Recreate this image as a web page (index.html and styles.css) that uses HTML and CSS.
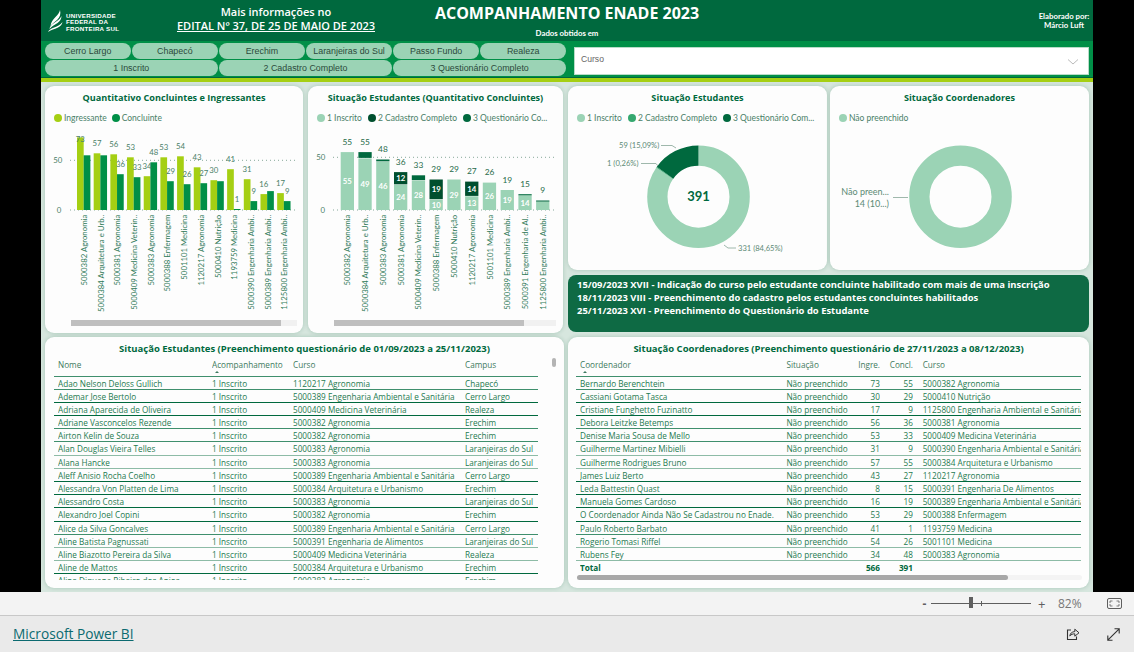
FILE: index.html
```html
<!DOCTYPE html>
<html lang="pt-BR">
<head>
<meta charset="utf-8">
<title>Acompanhamento ENADE 2023</title>
<link rel="stylesheet" href="styles.css">
</head>
<body>
<div class="stage">
<div class="canvas">
  <header class="head">
    <div class="logo">
      <svg class="flame" viewBox="47 9 17 24" width="17" height="24" aria-hidden="true">
        <path d="M60 10c1 4 0 7-3 10-2.500 2-5 4-6.500 6 .5-4 2.500-6.500 5-9 2.500-2.200 4-4.500 4.500-7z" fill="#fff"/>
        <path d="M61.500 16c0 3-1.500 5-4 7-2.500 1.700-5.500 3.200-8 6 .2-2.500 2-4.500 4.500-6 3-1.800 6-3.700 7.500-7z" fill="#fff"/>
        <path d="M62.500 22c-.5 3-2.500 4.500-5 5.700-3 1.300-6 2-9.500 4.300 1-2.200 3-3.300 5.500-4.300 3.500-1.300 7-2.500 9-5.700z" fill="#fff"/>
      </svg>
      <div class="logo-text">UNIVERSIDADE<br>FEDERAL DA<br>FRONTEIRA SUL</div>
    </div>
    <div class="info">
      <div>Mais informações no</div>
      <a class="info-link">EDITAL Nº 37, DE 25 DE MAIO DE 2023</a>
    </div>
    <div class="headline">
      <h1>ACOMPANHAMENTO ENADE 2023</h1>
      <div class="obtained">Dados obtidos em</div>
    </div>
    <div class="author">Elaborado por:<br>Márcio Luft</div>
  </header>

  <div class="filters">
    <div class="chips">
      <div class="chip">Cerro Largo</div>
      <div class="chip">Chapecó</div>
      <div class="chip">Erechim</div>
      <div class="chip">Laranjeiras do Sul</div>
      <div class="chip">Passo Fundo</div>
      <div class="chip">Realeza</div>
      <div class="chip wide">1 Inscrito</div>
      <div class="chip wide">2 Cadastro Completo</div>
      <div class="chip wide">3 Questionário Completo</div>
    </div>
    <div class="select">
      <span>Curso</span>
      <svg width="12" height="6" viewBox="0 0 12 6" aria-hidden="true"><path d="M1 .5 6 5 11 .5" fill="none" stroke="#a8a8a8" stroke-width=".8"/></svg>
    </div>
  </div>
  <div class="lime"></div>

  <main class="board">
    <div class="row-top">
      <section class="card chart-a">
        <h2 class="title">Quantitativo Concluintes e Ingressantes</h2>
        <div class="legend legend-a">
          <span class="item"><i class="dot lime-dot"></i>Ingressante</span>
          <span class="item"><i class="dot mid-dot"></i>Concluinte</span>
        </div>
        <svg class="plot" width="258" height="207" viewBox="45 126 258 207" role="img">
          <g class="grid"><line x1="70" x2="295" y1="160.300" y2="160.300"/><line x1="70" x2="295" y1="210" y2="210"/></g>
          <g class="axis"><text x="57.700" y="163">50</text><text x="59" y="212.700">0</text></g>
          <g class="c-lime">
            <rect x="77" y="137.400" width="6.700" height="72.600"/><rect x="93.680" y="153.300" width="6.700" height="56.700"/><rect x="110.360" y="154.300" width="6.700" height="55.700"/><rect x="127.040" y="157.300" width="6.700" height="52.700"/><rect x="143.720" y="176.200" width="6.700" height="33.800"/><rect x="160.400" y="157.300" width="6.700" height="52.700"/><rect x="177.080" y="156.300" width="6.700" height="53.700"/><rect x="193.760" y="167.300" width="6.700" height="42.700"/><rect x="210.440" y="180.200" width="6.700" height="29.800"/><rect x="227.120" y="169.200" width="6.700" height="40.800"/><rect x="243.800" y="179.200" width="6.700" height="30.800"/><rect x="260.480" y="194.100" width="6.700" height="15.900"/><rect x="277.160" y="193.100" width="6.700" height="16.900"/>
          </g>
          <g class="c-mid">
            <rect x="83.670" y="155.300" width="6.700" height="54.700"/><rect x="100.350" y="155.300" width="6.700" height="54.700"/><rect x="117.030" y="174.200" width="6.700" height="35.800"/><rect x="133.710" y="177.200" width="6.700" height="32.800"/><rect x="150.390" y="162.300" width="6.700" height="47.700"/><rect x="167.070" y="181.200" width="6.700" height="28.800"/><rect x="183.750" y="184.200" width="6.700" height="25.800"/><rect x="200.430" y="183.200" width="6.700" height="26.800"/><rect x="217.110" y="181.200" width="6.700" height="28.800"/><rect x="233.790" y="209" width="6.700" height="1"/><rect x="250.470" y="201.100" width="6.700" height="8.900"/><rect x="267.150" y="191.100" width="6.700" height="18.900"/><rect x="283.830" y="201.100" width="6.700" height="8.900"/>
          </g>
          <g class="val">
            <text x="80.300" y="142">73</text><text x="97" y="146.300">57</text><text x="113.700" y="147.300">56</text><text x="130.400" y="150.300">53</text><text x="147" y="169.200">34</text><text x="163.700" y="150.300">53</text><text x="180.400" y="149.300">54</text><text x="197.100" y="160.300">43</text><text x="213.800" y="173.200">30</text><text x="230.500" y="162.200">41</text><text x="247.100" y="172.200">31</text><text x="263.800" y="187.100">16</text><text x="280.500" y="186.100">17</text>
            <text x="120.400" y="167.200">36</text><text x="137" y="170.200">33</text><text x="153.700" y="155.300">48</text><text x="170.400" y="174.200">29</text><text x="187.100" y="177.200">26</text><text x="203.800" y="176.200">27</text><text x="237.100" y="202">1</text><text x="253.800" y="194.100">9</text><text x="287.200" y="194.100">9</text>
          </g>
          <g class="cat">
            <text transform="translate(87 214.700) rotate(-90)">5000382 Agronomia</text>
            <text transform="translate(103.700 214.700) rotate(-90)">5000384 Arquitetura e Urb..</text>
            <text transform="translate(120.400 214.700) rotate(-90)">5000381 Agronomia</text>
            <text transform="translate(137 214.700) rotate(-90)">5000409 Medicina Veterin..</text>
            <text transform="translate(153.700 214.700) rotate(-90)">5000383 Agronomia</text>
            <text transform="translate(170.400 214.700) rotate(-90)">5000388 Enfermagem</text>
            <text transform="translate(187.100 214.700) rotate(-90)">5001101 Medicina</text>
            <text transform="translate(203.800 214.700) rotate(-90)">1120217 Agronomia</text>
            <text transform="translate(220.500 214.700) rotate(-90)">5000410 Nutrição</text>
            <text transform="translate(237.100 214.700) rotate(-90)">1193759 Medicina</text>
            <text transform="translate(253.800 214.700) rotate(-90)">5000390 Engenharia Ambi..</text>
            <text transform="translate(270.500 214.700) rotate(-90)">5000389 Engenharia Ambi..</text>
            <text transform="translate(287.200 214.700) rotate(-90)">1125800 Engenharia Ambi..</text>
          </g>
          <rect class="track" x="71" y="320" width="226" height="6"/>
          <rect class="thumb" x="71" y="320" width="210" height="6"/>
        </svg>
      </section>

      <section class="card chart-b">
        <h2 class="title">Situação Estudantes (Quantitativo Concluintes)</h2>
        <div class="legend legend-b">
          <span class="item"><i class="dot soft-dot"></i>1 Inscrito</span>
          <span class="item"><i class="dot deep-dot"></i>2 Cadastro Completo</span>
          <span class="item"><i class="dot dark-dot"></i>3 Questionário Co...</span>
        </div>
        <svg class="plot" width="255" height="207" viewBox="308 126 255 207" role="img">
          <g class="grid"><line x1="333" x2="555" y1="157.300" y2="157.300"/><line x1="333" x2="555" y1="210" y2="210"/></g>
          <g class="axis"><text x="320.700" y="160">50</text><text x="322.700" y="212.700">0</text></g>
          <g class="c-soft">
            <rect x="340.700" y="152.100" width="13.300" height="57.900"/><rect x="358.400" y="158.400" width="13.300" height="51.600"/><rect x="376.200" y="161.600" width="13.300" height="48.400"/><rect x="394" y="184.700" width="13.300" height="25.300"/><rect x="411.800" y="180.500" width="13.300" height="29.500"/><rect x="429.500" y="199.500" width="13.300" height="10.500"/><rect x="447.300" y="179.500" width="13.300" height="30.500"/><rect x="465.100" y="196.300" width="13.300" height="13.700"/><rect x="482.800" y="182.600" width="13.300" height="27.400"/><rect x="500.600" y="190" width="13.300" height="20"/><rect x="518.400" y="195.300" width="13.300" height="14.700"/><rect x="536.100" y="201.600" width="13.300" height="8.400"/>
          </g>
          <g class="c-dark">
            <rect x="358.400" y="152.100" width="13.300" height="5.800"/><rect x="376.200" y="159.500" width="13.300" height="1.800"/><rect x="411.800" y="175.300" width="13.300" height="4.800"/><rect x="518.400" y="194.200" width="13.300" height="1.100"/><rect x="536.100" y="200.500" width="13.300" height="1.100"/>
          </g>
          <g class="c-deep">
            <rect x="394" y="172.100" width="13.300" height="12.200"/><rect x="429.500" y="179.500" width="13.300" height="19.600"/><rect x="465.100" y="181.600" width="13.300" height="14.300"/>
          </g>
          <g class="val tot">
            <text x="347.300" y="144.600">55</text><text x="365.100" y="144.600">55</text><text x="382.900" y="152">48</text><text x="400.700" y="164.600">36</text><text x="418.400" y="167.800">33</text><text x="436.200" y="172">29</text><text x="454" y="172">29</text><text x="471.800" y="174.100">27</text><text x="489.500" y="175.100">26</text><text x="507.300" y="182.500">19</text><text x="525.100" y="186.700">15</text><text x="542.800" y="193">9</text>
          </g>
          <g class="in">
            <text x="347.300" y="184">55</text><text x="365.100" y="187.200">49</text><text x="382.900" y="188.800">46</text><text x="400.700" y="200.400">24</text><text x="400.700" y="181.400">12</text><text x="418.400" y="198.300">28</text><text x="436.200" y="207.800">10</text><text x="436.200" y="192.300">19</text><text x="454" y="197.800">29</text><text x="471.800" y="206.200">13</text><text x="471.800" y="191.800">14</text><text x="489.500" y="199.300">26</text><text x="507.300" y="203">19</text><text x="525.100" y="205.700">14</text>
          </g>
          <g class="cat">
            <text transform="translate(350.300 214.700) rotate(-90)">5000382 Agronomia</text>
            <text transform="translate(368.100 214.700) rotate(-90)">5000384 Arquitetura e Urb..</text>
            <text transform="translate(385.900 214.700) rotate(-90)">5000383 Agronomia</text>
            <text transform="translate(403.700 214.700) rotate(-90)">5000381 Agronomia</text>
            <text transform="translate(421.400 214.700) rotate(-90)">5000409 Medicina Veterin..</text>
            <text transform="translate(439.200 214.700) rotate(-90)">5000388 Enfermagem</text>
            <text transform="translate(457 214.700) rotate(-90)">5000410 Nutrição</text>
            <text transform="translate(474.800 214.700) rotate(-90)">1120217 Agronomia</text>
            <text transform="translate(492.500 214.700) rotate(-90)">5001101 Medicina</text>
            <text transform="translate(510.300 214.700) rotate(-90)">5000389 Engenharia Ambi..</text>
            <text transform="translate(528.100 214.700) rotate(-90)">5000391 Engenharia de Al..</text>
            <text transform="translate(545.800 214.700) rotate(-90)">1125800 Engenharia Ambi..</text>
          </g>
          <rect class="track" x="334" y="320" width="222" height="6"/>
          <rect class="thumb" x="334" y="320" width="190" height="6"/>
        </svg>
      </section>
    </div>

    <div class="right-col">
      <div class="donuts">
        <section class="card donut-a">
          <h2 class="title">Situação Estudantes</h2>
          <div class="legend legend-c">
            <span class="item"><i class="dot soft-dot"></i>1 Inscrito</span>
            <span class="item"><i class="dot green-dot"></i>2 Cadastro Completo</span>
            <span class="item"><i class="dot dark-dot"></i>3 Questionário Com...</span>
          </div>
          <svg class="plot" width="259" height="144" viewBox="568 126 259 144" role="img">
            <g class="ring" transform="rotate(-90 698.500 196.700)">
              <circle class="r-soft" cx="698.500" cy="196.700" r="41.150" pathLength="100" stroke-dasharray="84.650 15.350"/>
              <circle class="r-green" cx="698.500" cy="196.700" r="41.150" pathLength="100" stroke-dasharray=".26 99.740" stroke-dashoffset="-84.650"/>
              <circle class="r-dark" cx="698.500" cy="196.700" r="41.150" pathLength="100" stroke-dasharray="15.090 84.910" stroke-dashoffset="-84.910"/>
            </g>
            <text class="center" x="698.500" y="201.300">391</text>
            <path class="leader" d="M661 145.500h11l4 2.500M641 163.500h15l2 2.500M724 245l4 3h8"/>
            <g class="note"><text x="619" y="147.800">59 (15,09%)</text><text x="607" y="165.800">1 (0,26%)</text><text x="738" y="250.800">331 (84,65%)</text></g>
          </svg>
        </section>
        <section class="card donut-b">
          <h2 class="title">Situação Coordenadores</h2>
          <div class="legend legend-d">
            <span class="item"><i class="dot soft-dot"></i>Não preenchido</span>
          </div>
          <svg class="plot" width="259" height="144" viewBox="830 126 259 144" role="img">
            <circle class="r-soft" cx="960.500" cy="196.700" r="41.150"/>
            <path class="leader" d="M893 197.500h15"/>
            <g class="note big"><text x="889" y="195">Não preen...</text><text x="889" y="207">14 (10...)</text></g>
          </svg>
        </section>
      </div>
      <aside class="notice">
        <p>15/09/2023 XVII - Indicação do curso pelo estudante concluinte habilitado com mais de uma inscrição</p>
        <p>18/11/2023 VIII - Preenchimento do cadastro pelos estudantes concluintes habilitados</p>
        <p>25/11/2023 XVI - Preenchimento do Questionário do Estudante</p>
      </aside>
    </div>

    <section class="card tbl tbl-left">
      <h2 class="title">Situação Estudantes (Preenchimento questionário de 01/09/2023 a 25/11/2023)</h2>
      <div class="r hd">
        <span>Nome</span><span class="sort">Acompanhamento</span><span>Curso</span><span>Campus</span>
      </div>
      <div class="rows">
        <div class="r l2"><span>Adao Nelson Deloss Gullich</span><span>1 Inscrito</span><span>1120217 Agronomia</span><span>Chapecó</span></div>
        <div class="r l1"><span>Ademar Jose Bertolo</span><span>1 Inscrito</span><span>5000389 Engenharia Ambiental e Sanitária</span><span>Cerro Largo</span></div>
        <div class="r l1"><span>Adriana Aparecida de Oliveira</span><span>1 Inscrito</span><span>5000409 Medicina Veterinária</span><span>Realeza</span></div>
        <div class="r l2"><span>Adriane Vasconcelos Rezende</span><span>1 Inscrito</span><span>5000382 Agronomia</span><span>Erechim</span></div>
        <div class="r l2"><span>Airton Kelin de Souza</span><span>1 Inscrito</span><span>5000382 Agronomia</span><span>Erechim</span></div>
        <div class="r l3"><span>Alan Douglas Vieira Telles</span><span>1 Inscrito</span><span>5000383 Agronomia</span><span>Laranjeiras do Sul</span></div>
        <div class="r l3"><span>Alana Hancke</span><span>1 Inscrito</span><span>5000383 Agronomia</span><span>Laranjeiras do Sul</span></div>
        <div class="r l1"><span>Aleff Anisio Rocha Coelho</span><span>1 Inscrito</span><span>5000389 Engenharia Ambiental e Sanitária</span><span>Cerro Largo</span></div>
        <div class="r l1"><span>Alessandra Von Platten de Lima</span><span>1 Inscrito</span><span>5000384 Arquitetura e Urbanismo</span><span>Erechim</span></div>
        <div class="r l1"><span>Alessandro Costa</span><span>1 Inscrito</span><span>5000383 Agronomia</span><span>Laranjeiras do Sul</span></div>
        <div class="r l1"><span>Alexandro Joel Copini</span><span>1 Inscrito</span><span>5000382 Agronomia</span><span>Erechim</span></div>
        <div class="r l2"><span>Alice da Silva Goncalves</span><span>1 Inscrito</span><span>5000389 Engenharia Ambiental e Sanitária</span><span>Cerro Largo</span></div>
        <div class="r l3"><span>Aline Batista Pagnussati</span><span>1 Inscrito</span><span>5000391 Engenharia de Alimentos</span><span>Laranjeiras do Sul</span></div>
        <div class="r l3"><span>Aline Biazotto Pereira da Silva</span><span>1 Inscrito</span><span>5000409 Medicina Veterinária</span><span>Realeza</span></div>
        <div class="r l1"><span>Aline de Mattos</span><span>1 Inscrito</span><span>5000384 Arquitetura e Urbanismo</span><span>Erechim</span></div>
        <div class="r l3"><span>Aline Diquana Ribeiro dos Anjos</span><span>1 Inscrito</span><span>5000382 Agronomia</span><span>Erechim</span></div>
      </div>
      <div class="vbar"></div>
    </section>

    <section class="card tbl tbl-right">
      <h2 class="title">Situação Coordenadores (Preenchimento questionário de 27/11/2023 a 08/12/2023)</h2>
      <div class="r hd">
        <span class="sort">Coordenador</span><span>Situação</span><span class="n">Ingre.</span><span class="n">Concl.</span><span class="cc">Curso</span>
      </div>
      <div class="rows">
        <div class="r l2"><span>Bernardo Berenchtein</span><span>Não preenchido</span><span class="n">73</span><span class="n">55</span><span class="cc">5000382 Agronomia</span></div>
        <div class="r l1"><span>Cassiani Gotama Tasca</span><span>Não preenchido</span><span class="n">30</span><span class="n">29</span><span class="cc">5000410 Nutrição</span></div>
        <div class="r l1"><span>Cristiane Funghetto Fuzinatto</span><span>Não preenchido</span><span class="n">17</span><span class="n">9</span><span class="cc">1125800 Engenharia Ambiental e Sanitária</span></div>
        <div class="r l2"><span>Debora Leitzke Betemps</span><span>Não preenchido</span><span class="n">56</span><span class="n">36</span><span class="cc">5000381 Agronomia</span></div>
        <div class="r l2"><span>Denise Maria Sousa de Mello</span><span>Não preenchido</span><span class="n">53</span><span class="n">33</span><span class="cc">5000409 Medicina Veterinária</span></div>
        <div class="r l3"><span>Guilherme Martinez Mibielli</span><span>Não preenchido</span><span class="n">31</span><span class="n">9</span><span class="cc">5000390 Engenharia Ambiental e Sanitária</span></div>
        <div class="r l3"><span>Guilherme Rodrigues Bruno</span><span>Não preenchido</span><span class="n">57</span><span class="n">55</span><span class="cc">5000384 Arquitetura e Urbanismo</span></div>
        <div class="r l1"><span>James Luiz Berto</span><span>Não preenchido</span><span class="n">43</span><span class="n">27</span><span class="cc">1120217 Agronomia</span></div>
        <div class="r l1"><span>Leda Battestin Quast</span><span>Não preenchido</span><span class="n">8</span><span class="n">15</span><span class="cc">5000391 Engenharia De Alimentos</span></div>
        <div class="r l1"><span>Manuela Gomes Cardoso</span><span>Não preenchido</span><span class="n">16</span><span class="n">19</span><span class="cc">5000389 Engenharia Ambiental e Sanitária</span></div>
        <div class="r l1"><span>O Coordenador Ainda Não Se Cadastrou no Enade.</span><span>Não preenchido</span><span class="n">53</span><span class="n">29</span><span class="cc">5000388 Enfermagem</span></div>
        <div class="r l2"><span>Paulo Roberto Barbato</span><span>Não preenchido</span><span class="n">41</span><span class="n">1</span><span class="cc">1193759 Medicina</span></div>
        <div class="r l3"><span>Rogerio Tomasi Riffel</span><span>Não preenchido</span><span class="n">54</span><span class="n">26</span><span class="cc">5001101 Medicina</span></div>
        <div class="r l3"><span>Rubens Fey</span><span>Não preenchido</span><span class="n">34</span><span class="n">48</span><span class="cc">5000383 Agronomia</span></div>
        <div class="r total"><span>Total</span><span></span><span class="n">566</span><span class="n">391</span><span></span></div>
      </div>
      <div class="hbar"><div class="hthumb"></div></div>
    </section>
  </main>
</div>
</div>

<div class="zoombar">
  <span class="z-btn">-</span>
  <div class="slider"><i class="s-thumb"></i><i class="s-tick"></i></div>
  <span class="z-btn plus">+</span>
  <span class="pct">82%</span>
  <svg class="fit" width="15" height="11" viewBox="0 0 15 11" aria-hidden="true">
    <rect x=".5" y=".5" width="14" height="10" rx="1.500" fill="none" stroke="#5f5f5f"/>
    <path d="M3 5V3h2.500M12 5V3H9.500M3 6v2h2.500M12 6v2H9.500" fill="none" stroke="#5f5f5f" stroke-width=".8"/>
  </svg>
</div>
<footer class="foot">
  <a class="pbi">Microsoft Power BI</a>
  <div class="foot-icons">
    <svg width="14" height="14" viewBox="0 0 14 14" aria-hidden="true">
      <path d="M5 3H1.500v9.500h9V9.500" fill="none" stroke="#333" stroke-width="1.100"/>
      <path d="M3.800 9c.4-2.700 2-4.200 5-4.400V2.200L13 5.800 8.800 9.200V6.800c-2 0-3.700.6-5 2.200z" fill="none" stroke="#333" stroke-width="1"/>
    </svg>
    <svg width="13" height="13" viewBox="0 0 13 13" aria-hidden="true">
      <path d="M.8 12.200 12.200.8M7.500.8h4.700v4.700M.8 7.500v4.700h4.700" fill="none" stroke="#333" stroke-width="1.100"/>
    </svg>
  </div>
</footer>
</body>
</html>
```

FILE: styles.css
```css
* { box-sizing: border-box; }
html, body { margin: 0; padding: 0; }
body {
  width: 1134px;
  height: 652px;
  overflow: hidden;
  background: #eaeaea;
  font-family: "Open Sans", "Liberation Sans", sans-serif;
}
.stage {
  height: 592px;
  background: #000;
  padding: 0 41px;
}
.canvas {
  width: 1052px;
  height: 592px;
  background: #d6e6de;
  overflow: hidden;
}

/* header */
.head {
  height: 41px;
  background: #00693e;
  color: #fff;
  display: flex;
}
.logo {
  width: 135px;
  display: flex;
  align-items: flex-start;
  padding: 9px 0 0 6px;
  gap: 2px;
}
.flame { display: block; flex: none; }
.logo-text {
  font: 700 6.200px/6.300px "Liberation Sans", sans-serif;
  letter-spacing: .25px;
  padding-top: 4px;
  white-space: nowrap;
}
.info {
  width: 200px;
  text-align: center;
  font-size: 11px;
  font-weight: 600;
  line-height: 14px;
  padding-top: 5px;
  white-space: nowrap;
}
.info-link { display: block; text-decoration: underline; }
.headline {
  margin-left: 57px;
  width: 268px;
  text-align: center;
}
.headline h1 {
  margin: 0;
  font-size: 16px;
  font-weight: 700;
  line-height: 18px;
  padding-top: 4px;
  white-space: nowrap;
}
.obtained {
  font: 700 7.800px/10px "Lato", sans-serif;
  margin-top: 6px;
}
.author {
  margin-left: auto;
  width: 56px;
  padding: 12px 2px 0 0;
  text-align: center;
  font: 700 7.800px/9px "Lato", sans-serif;
  white-space: nowrap;
}

/* filters */
.filters {
  height: 37px;
  background: #008f47;
  display: flex;
  padding: 2px 4px 0 4px;
  border-bottom: 1px solid #00693e;
}
.chips {
  width: 521px;
  display: grid;
  grid-template-columns: repeat(6, 1fr);
  grid-auto-rows: 16px;
  gap: 1px 1.600px;
}
.chip {
  background: #9bd3b5;
  border-radius: 8px;
  text-align: center;
  font: 400 8.900px/16px "Liberation Sans", sans-serif;
  color: #2b4a3b;
  white-space: nowrap;
}
.chip.wide { grid-column: span 2; }
.select {
  margin: 4px 0 0 8px;
  width: 515px;
  height: 28px;
  background: #fff;
  border: 1px solid #b8dcc8;
  display: flex;
  justify-content: space-between;
  align-items: center;
  padding: 0 9px 0 6px;
  font: 400 8.600px/12px "Liberation Sans", sans-serif;
  color: #666;
}
.select span { margin-top: -4px; }
.select svg { margin-top: 2px; }
.lime { height: 4px; background: #a5cf13; }

/* board */
.board {
  display: grid;
  grid-template-columns: 519px 521px;
  grid-template-rows: 247px 251px;
  gap: 4px;
  padding: 4px;
}
.row-top { display: flex; gap: 5px; }
.right-col { display: flex; flex-direction: column; gap: 5px; }
.donuts { display: flex; gap: 3px; height: 184px; }
.card {
  background: #fdfdfd;
  border-radius: 9px;
  box-shadow: 0 0 4px rgba(0, 90, 55, .22);
  position: relative;
  overflow: hidden;
}
.chart-a { width: 258px; }
.chart-b { width: 255px; }
.donut-a, .donut-b { width: 259px; }
.title {
  margin: 0;
  height: 24px;
  text-align: center;
  font-size: 9.150px;
  font-weight: 700;
  line-height: 24px;
  color: #00693e;
  white-space: nowrap;
}
.legend {
  height: 16px;
  display: flex;
  align-items: center;
  font: 400 8.500px/16px "Lato", sans-serif;
  color: #4a7f68;
  white-space: nowrap;
}
.item { display: flex; align-items: center; gap: 2px; }
.dot { display: block; flex: none; width: 8px; height: 8px; border-radius: 50%; }
.lime-dot { background: #a5cf13; }
.mid-dot { background: #008f47; }
.soft-dot { background: #9bd3b5; }
.deep-dot { background: #004f2e; }
.dark-dot { background: #00693e; }
.green-dot { background: #35a86f; }
.legend-a { padding-left: 9px; gap: 5px; }
.legend-b { padding-left: 9px; gap: 6px; }
.legend-c { padding-left: 9px; gap: 6px; }
.legend-d { padding-left: 9px; }
.plot { display: block; }
.plot text { font-family: "Lato", sans-serif; }
.grid line { stroke: #86a899; stroke-width: 1; stroke-dasharray: 1 3; }
.axis text { font-size: 7.800px; fill: #4a7f68; text-anchor: middle; }
.val text { font-size: 7.800px; fill: #4a7f68; text-anchor: middle; }
.val.tot text { fill: #1f6b4a; font-size: 8.400px; }
.in text { font-size: 7.800px; font-weight: 700; fill: #fff; text-anchor: middle; }
.cat text { font-size: 7.800px; fill: #2f7a58; text-anchor: end; }
.c-lime rect { fill: #a5cf13; }
.c-mid rect { fill: #008f47; }
.c-soft rect { fill: #9bd3b5; }
.c-dark rect { fill: #00693e; }
.c-deep rect { fill: #004f2e; }
.track { fill: #f1f1f1; }
.thumb { fill: #bfbfbf; }
.r-soft, .r-green, .r-dark { fill: none; stroke-width: 20.300; }
.r-soft { stroke: #9bd3b5; }
.r-green { stroke: #35a86f; }
.r-dark { stroke: #00693e; }
.plot .center {
  font-size: 13px;
  font-weight: 700;
  fill: #00693e;
  text-anchor: middle;
}
.leader { fill: none; stroke: #9fb8ac; stroke-width: 1; }
.note text { font-size: 7.600px; fill: #5c8a75; }
.note.big text { font-size: 9px; text-anchor: end; }

/* notice */
.notice {
  height: 57px;
  background: #0e6a44;
  border-radius: 8px;
  color: #fff;
  padding: 3px 9px;
  font-size: 9.440px;
  font-weight: 700;
  line-height: 13px;
  white-space: nowrap;
}
.notice p { margin: 0; }

/* tables */
.tbl-left { padding: 0 26px 0 9px; }
.tbl-right { padding: 0 8px; }
.tbl .title { margin: 0 -9px; height: 22px; line-height: 24px; font-size: 9.500px; }
.tbl-left .title { margin-right: -26px; }
.tbl-right .title { margin: 0 -8px; }
.r {
  display: grid;
  height: 13.200px;
  padding-left: 4px;
  font-size: 8.200px;
  line-height: 14px;
  color: #1d7a50;
  white-space: nowrap;
}
.r span { overflow: hidden; }
.tbl-left .r { grid-template-columns: 154px 81px 172px 73px; }
.tbl-right .r { grid-template-columns: 206.400px 64px 29.600px 33px 168px; }
.tbl-right .r .cc { padding-left: 9.700px; }
.n { text-align: right; }
.r.hd {
  height: 17.500px;
  line-height: 12.500px;
  border-bottom: 1px solid #3f8f6d;
  color: #3d7a60;
}
.sort::after {
  content: "";
  display: block;
  width: 0;
  margin: -.5px 0 0 3px;
  border: 2px solid transparent;
  border-top: 0;
  border-bottom: 2px solid #3d7a60;
}
.rows { height: 203.800px; overflow: hidden; }
.r.l1 { border-bottom: 1px solid #00693e; }
.r.l2 { border-bottom: 1px solid #3f8f6d; }
.r.l3 { border-bottom: 1px solid #8dbba6; }
.r.total { font-weight: 700; color: #00693e; }
.vbar {
  position: absolute;
  left: 506.500px;
  top: 21px;
  width: 4px;
  height: 9px;
  border-radius: 2px;
  background: #b4b4b4;
}
.tbl-right .rows { height: 198px; }
.hbar {
  height: 5px;
  background: #f4f4f4;
  border-radius: 2.500px;
  margin: 0 -1px 0 1px;
}
.hthumb { width: 431px; height: 5px; background: #a8a8a8; border-radius: 2.500px; }

/* zoom bar */
.zoombar {
  height: 24px;
  background: #f3f3f3;
  border-bottom: 1px solid #c8c8c8;
  display: flex;
  align-items: center;
  padding-left: 922px;
  font: 400 12px/16px "Open Sans", sans-serif;
  color: #5f5f5f;
}
.z-btn { width: 5px; font-weight: 700; text-align: center; }
.slider {
  position: relative;
  width: 100px;
  height: 1px;
  margin: 0 7px 0 4px;
  background: #5f5f5f;
}
.s-thumb {
  position: absolute;
  left: 38px;
  top: -6px;
  width: 4px;
  height: 11px;
  background: #5f5f5f;
}
.s-tick {
  position: absolute;
  left: 50px;
  top: -2px;
  width: 1px;
  height: 5px;
  background: #5f5f5f;
}
.plus { width: 7px; font-weight: 400; font-size: 13px; }
.pct { margin-left: 13px; width: 25px; color: #777; }
.fit { margin-left: 24px; }

/* footer */
.foot {
  height: 36px;
  display: flex;
  align-items: center;
  justify-content: space-between;
  padding: 0 14px 0 13px;
}
.pbi {
  font-size: 13.700px;
  line-height: 20px;
  color: #0b6a70;
  text-decoration: underline;
}
.foot-icons { display: flex; gap: 27px; align-items: center; }
```
